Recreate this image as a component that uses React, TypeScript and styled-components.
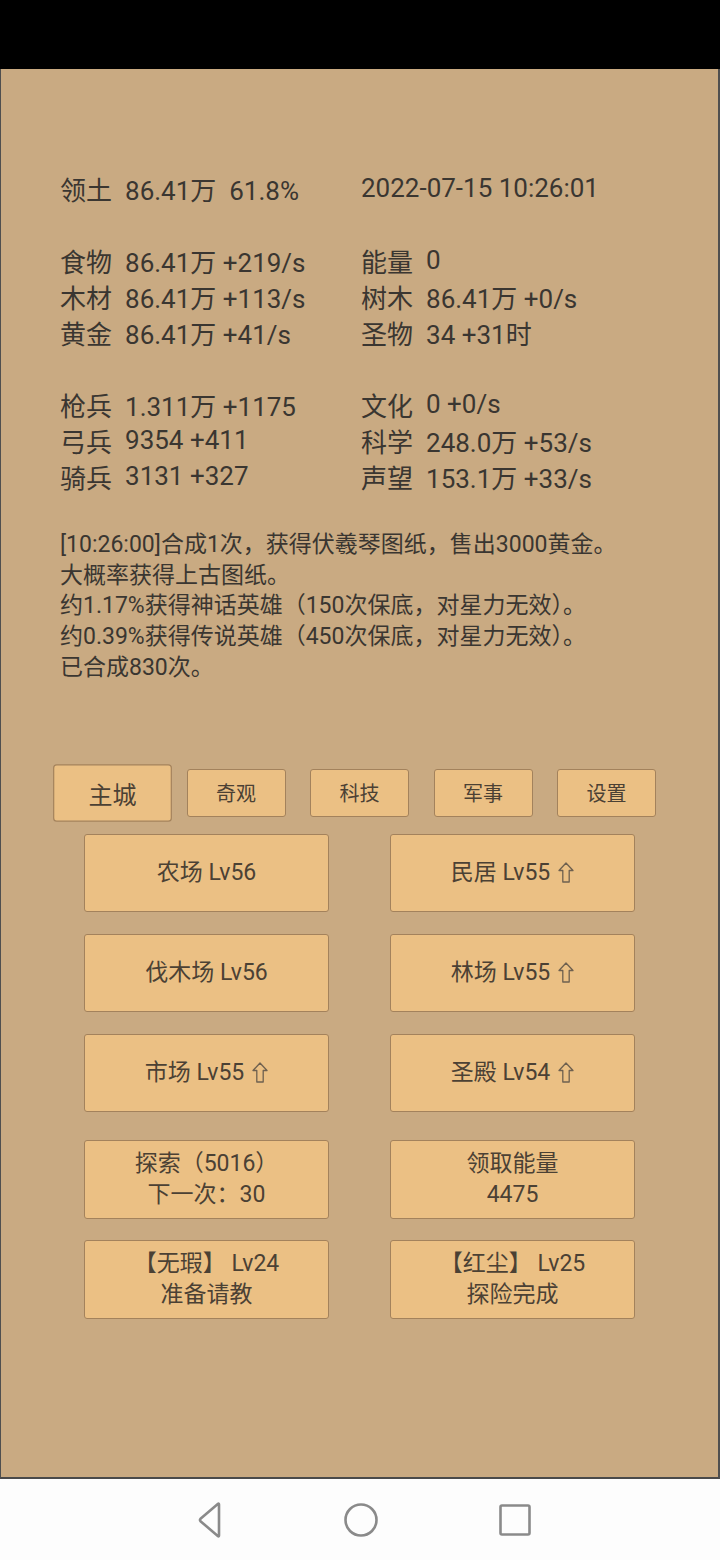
import React from 'react';
import styled, { createGlobalStyle } from 'styled-components';

const GlobalStyle = createGlobalStyle`
  html, body {
    margin: 0;
    padding: 0;
    background: #fdfdfd;
  }
  body {
    font-family: Roboto, "Noto Sans CJK SC", sans-serif;
  }
`;

const Screen = styled.div`
  width: 720px;
  height: 1560px;
  display: flex;
  flex-direction: column;
  overflow: hidden;
`;

const StatusBar = styled.div`
  height: 69px;
  background: #000;
  flex-shrink: 0;
`;

const Panel = styled.div`
  height: 1410px;
  box-sizing: border-box;
  background: #c9aa82;
  border-left: 1px solid #4f4f4f;
  border-right: 2px solid #4f4f4f;
  border-bottom: 2px solid #4a4a4a;
  padding: 101px 0 0 59px;
  display: flex;
  flex-direction: column;
  color: #3a3631;
`;

const StatGroup = styled.div<{ $gap?: number }>`
  display: grid;
  grid-template-columns: 301px 1fr;
  margin-top: ${p => p.$gap ?? 0}px;
`;

const StatCell = styled.div`
  display: flex;
  align-items: center;
  height: 36px;
  font-size: 26px;
  white-space: nowrap;
`;

const StatLabel = styled.span`
  margin-right: 13px;
`;

const Log = styled.div`
  margin-top: 36px;
  font-size: 23px;
  line-height: 30.7px;
  white-space: nowrap;
`;

const Controls = styled.div`
  margin-left: -59px;
  display: flex;
  flex-direction: column;
  align-items: center;
`;

const Tabs = styled.div`
  margin-top: 85px;
  display: flex;
  gap: 24.5px;
`;

const Tab = styled.div<{ $active?: boolean }>`
  width: 99px;
  height: 48px;
  box-sizing: border-box;
  display: flex;
  align-items: center;
  justify-content: center;
  background: #ebc084;
  border: 1px solid #a3825c;
  border-radius: 3px;
  font-size: 20px;
  color: #4b4134;
  transform: ${p => (p.$active ? 'scale(1.2)' : 'none')};
`;

const Buildings = styled.div<{ $gap: number; $top: number; $h: number }>`
  margin-top: ${p => p.$top}px;
  display: grid;
  grid-template-columns: 245px 245px;
  column-gap: 61px;
  row-gap: ${p => p.$gap}px;
  grid-auto-rows: ${p => p.$h}px;
`;

const BuildButton = styled.div`
  box-sizing: border-box;
  display: flex;
  flex-direction: column;
  align-items: center;
  justify-content: center;
  background: #ebc084;
  border: 1px solid #a3825c;
  border-radius: 3px;
  font-size: 23px;
  line-height: 31px;
  color: #4b4134;
  white-space: nowrap;
`;

const ButtonLine = styled.span`
  display: flex;
  align-items: center;
  gap: 8px;
`;

const UpArrow = () => (
  <svg width="16" height="21" viewBox="0 0 16 21">
    <path
      d="M8 1 L15 8.5 L11.2 8.5 L11.2 20 L4.8 20 L4.8 8.5 L1 8.5 Z"
      fill="none"
      stroke="#6e604f"
      strokeWidth="1.3"
      strokeLinejoin="round"
    />
  </svg>
);

const NavBar = styled.div`
  flex: 1;
  background: #fdfdfd;
  display: flex;
  align-items: center;
  justify-content: center;
  gap: 118px;
  padding-left: 2px;
`;

const NavIcon = styled.svg`
  width: 36px;
  height: 36px;
`;

const stats = [
  [
    [['领土', '86.41万\u00a0\u00a061.8%'], ['', '2022-07-15 10:26:01']],
  ],
  [
    [['食物', '86.41万 +219/s'], ['能量', '0']],
    [['木材', '86.41万 +113/s'], ['树木', '86.41万 +0/s']],
    [['黄金', '86.41万 +41/s'], ['圣物', '34 +31时']],
  ],
  [
    [['枪兵', '1.311万 +1175'], ['文化', '0 +0/s']],
    [['弓兵', '9354 +411'], ['科学', '248.0万 +53/s']],
    [['骑兵', '3131 +327'], ['声望', '153.1万 +33/s']],
  ],
];

const logLines = [
  '[10:26:00]合成1次，获得伏羲琴图纸，售出3000黄金。',
  '大概率获得上古图纸。',
  '约1.17%获得神话英雄（150次保底，对星力无效）。',
  '约0.39%获得传说英雄（450次保底，对星力无效）。',
  '已合成830次。',
];

const tabs = ['主城', '奇观', '科技', '军事', '设置'];

const buildings = [
  { name: '农场 Lv56', up: false },
  { name: '民居 Lv55', up: true },
  { name: '伐木场 Lv56', up: false },
  { name: '林场 Lv55', up: true },
  { name: '市场 Lv55', up: true },
  { name: '圣殿 Lv54', up: true },
];

const actions = [
  ['探索（5016）', '下一次：30'],
  ['领取能量', '4475'],
  ['【无瑕】 Lv24', '准备请教'],
  ['【红尘】 Lv25', '探险完成'],
];

const App: React.FC = () => {
  return (
    <>
      <GlobalStyle />
      <Screen>
        <StatusBar />
        <Panel>
          {stats.map((group, gi) => (
            <StatGroup key={gi} $gap={gi === 0 ? 0 : 36}>
              {group.map((row, ri) =>
                row.map(([label, value], ci) => (
                  <StatCell key={`${ri}-${ci}`}>
                    {label && <StatLabel>{label}</StatLabel>}
                    <span>{value}</span>
                  </StatCell>
                ))
              )}
            </StatGroup>
          ))}

          <Log>
            {logLines.map(line => (
              <div key={line}>{line}</div>
            ))}
          </Log>

          <Controls>
            <Tabs>
              {tabs.map((t, i) => (
                <Tab key={t} $active={i === 0}>{t}</Tab>
              ))}
            </Tabs>

            <Buildings $top={17} $gap={22} $h={78}>
              {buildings.map(b => (
                <BuildButton key={b.name}>
                  <ButtonLine>
                    {b.name}
                    {b.up && <UpArrow />}
                  </ButtonLine>
                </BuildButton>
              ))}
            </Buildings>

            <Buildings $top={28} $gap={21} $h={79}>
              {actions.map(([a, b]) => (
                <BuildButton key={a}>
                  <span>{a}</span>
                  <span>{b}</span>
                </BuildButton>
              ))}
            </Buildings>
          </Controls>
        </Panel>
        <NavBar>
          <NavIcon viewBox="0 0 36 36">
            <path
              d="M30 2.5 L30 33.5 Q30 35 28.8 34 L11.5 19.2 Q10.5 18 11.5 16.8 L28.8 2 Q30 1 30 2.5 Z"
              fill="none"
              stroke="#8a8a8a"
              strokeWidth="2.6"
              strokeLinejoin="round"
            />
          </NavIcon>
          <NavIcon viewBox="0 0 36 36">
            <circle cx="18" cy="18" r="15.5" fill="none" stroke="#8a8a8a" strokeWidth="2.6" />
          </NavIcon>
          <NavIcon viewBox="0 0 36 36">
            <rect x="3.5" y="3.5" width="29" height="29" rx="1.5" fill="none" stroke="#8a8a8a" strokeWidth="2.6" />
          </NavIcon>
        </NavBar>
      </Screen>
    </>
  );
};

export default App;
